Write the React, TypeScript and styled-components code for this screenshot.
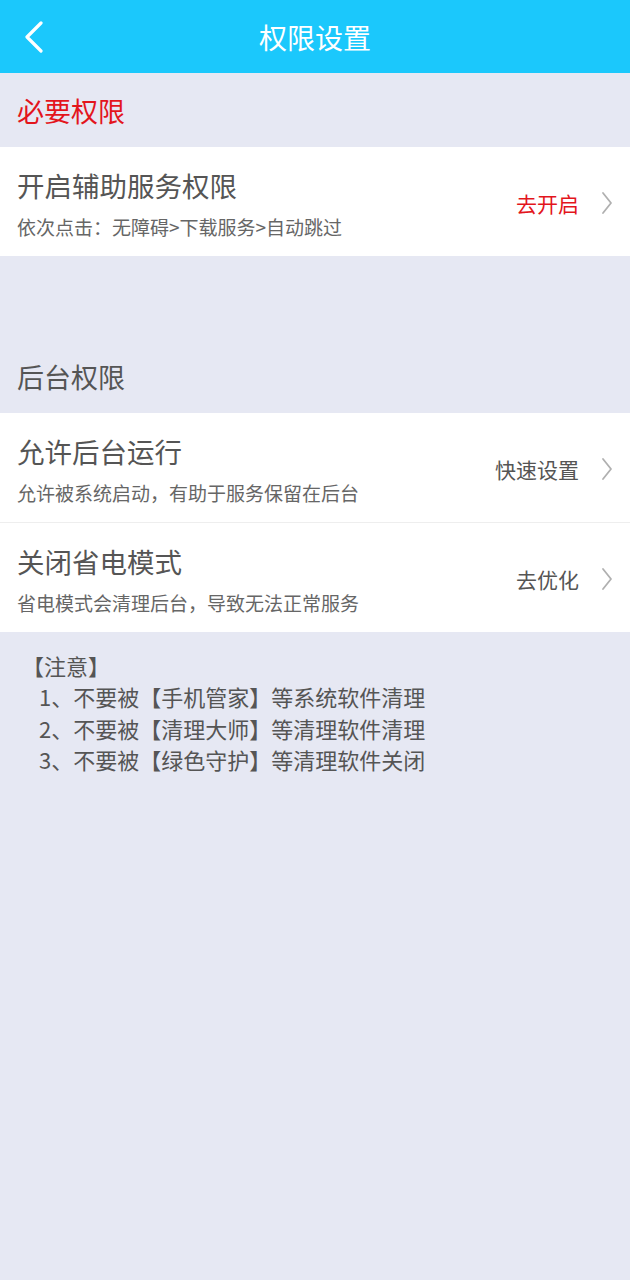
import React from "react";
import styled, { createGlobalStyle } from "styled-components";

const GlobalStyle = createGlobalStyle`
  html, body {
    margin: 0;
    padding: 0;
    background: #e6e8f3;
  }
  body {
    font-family: "Noto Sans CJK SC", "Noto Sans", sans-serif;
  }
  #root {
    min-height: 1280px;
  }
`;

const Page = styled.div`
  width: 630px;
  min-height: 1280px;
  background: #e6e8f3;
  display: flex;
  flex-direction: column;
`;

const TopBar = styled.header`
  height: 73px;
  background: #1bc8fc;
  display: grid;
  grid-template-columns: 80px 1fr 80px;
  align-items: center;
`;

const BackButton = styled.button`
  border: 0;
  background: transparent;
  padding: 0 0 0 24px;
  height: 73px;
  display: flex;
  align-items: center;
  cursor: pointer;
`;

const Title = styled.h1`
  margin: 0;
  text-align: center;
  color: #ffffff;
  font-size: 28px;
  font-weight: 400;
  line-height: 40px;
`;

const SectionLabel = styled.div<{ $red?: boolean; $spaced?: boolean }>`
  height: 74px;
  margin-top: ${(p) => (p.$spaced ? "83px" : "0")};
  padding-left: 17px;
  display: flex;
  align-items: center;
  font-size: 27px;
  color: ${(p) => (p.$red ? "#e3151c" : "#555555")};
`;

const Group = styled.div`
  background: #ffffff;
  display: flex;
  flex-direction: column;
`;

const Row = styled.div<{ $divided?: boolean }>`
  display: flex;
  align-items: center;
  padding: 20px 17px 16px 17px;
  border-top: ${(p) => (p.$divided ? "1px solid #eeeeee" : "none")};
`;

const RowText = styled.div`
  flex: 1;
  display: flex;
  flex-direction: column;
  gap: 11px;
`;

const RowTitle = styled.div`
  font-size: 27.5px;
  line-height: 36px;
  color: #555555;
`;

const RowSub = styled.div`
  font-size: 19px;
  line-height: 26px;
  color: #666666;
`;

const Action = styled.div<{ $red?: boolean }>`
  display: flex;
  align-items: center;
  gap: 22px;
  font-size: 21px;
  color: ${(p) => (p.$red ? "#e3151c" : "#555555")};
  padding-bottom: 2px;
`;

const Notes = styled.div`
  padding: 18px 0 0 22px;
  font-size: 22px;
  line-height: 31.3px;
  color: #555555;
`;

const NoteItem = styled.div`
  padding-left: 17px;
`;

const Chevron = () => (
  <svg width="12" height="24" viewBox="0 0 12 24" fill="none">
    <path d="M2 2 L10 12 L2 22" stroke="#b0b0b0" strokeWidth="1.8" strokeLinecap="round" strokeLinejoin="round" />
  </svg>
);

const BackIcon = () => (
  <svg width="20" height="32" viewBox="0 0 20 32" fill="none">
    <path d="M17 2 L3 16 L17 30" stroke="#ffffff" strokeWidth="3.2" strokeLinecap="round" strokeLinejoin="round" />
  </svg>
);

type Item = { title: string; sub: string; action: string; red?: boolean };

const required: Item[] = [
  { title: "开启辅助服务权限", sub: "依次点击：无障碍>下载服务>自动跳过", action: "去开启", red: true },
];

const background: Item[] = [
  { title: "允许后台运行", sub: "允许被系统启动，有助于服务保留在后台", action: "快速设置" },
  { title: "关闭省电模式", sub: "省电模式会清理后台，导致无法正常服务", action: "去优化" },
];

const notes = [
  "1、不要被【手机管家】等系统软件清理",
  "2、不要被【清理大师】等清理软件清理",
  "3、不要被【绿色守护】等清理软件关闭",
];

const ItemRow = ({ item, divided }: { item: Item; divided?: boolean }) => (
  <Row $divided={divided}>
    <RowText>
      <RowTitle>{item.title}</RowTitle>
      <RowSub>{item.sub}</RowSub>
    </RowText>
    <Action $red={item.red}>
      <span>{item.action}</span>
      <Chevron />
    </Action>
  </Row>
);

export default function App() {
  return (
    <>
      <GlobalStyle />
      <Page>
        <TopBar>
          <BackButton aria-label="返回">
            <BackIcon />
          </BackButton>
          <Title>权限设置</Title>
          <span />
        </TopBar>
        <SectionLabel $red>必要权限</SectionLabel>
        <Group>
          {required.map((it) => (
            <ItemRow key={it.title} item={it} />
          ))}
        </Group>
        <SectionLabel $spaced>后台权限</SectionLabel>
        <Group>
          {background.map((it, i) => (
            <ItemRow key={it.title} item={it} divided={i > 0} />
          ))}
        </Group>
        <Notes>
          <div>【注意】</div>
          {notes.map((n) => (
            <NoteItem key={n}>{n}</NoteItem>
          ))}
        </Notes>
      </Page>
    </>
  );
}
